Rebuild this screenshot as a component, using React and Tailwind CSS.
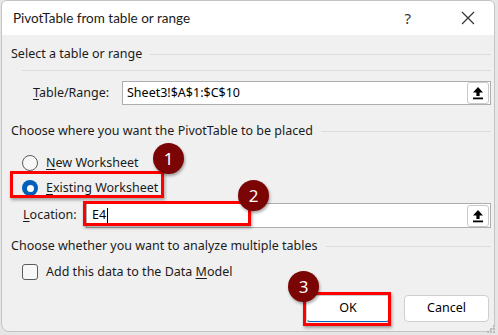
import React from 'react';

const font = { fontFamily: '"Noto Sans", "Open Sans", sans-serif' };

const Ul = ({ children }) => <span className="underline underline-offset-2">{children}</span>;

const UploadBtn = () => (
  <div className="w-[22px] h-[22px] bg-white border border-[#c9c9c9] rounded-[3px] flex items-center justify-center">
    <svg width="12" height="14" viewBox="0 0 12 14">
      <path d="M6 1 L11 6.5 H7.6 V10 H4.4 V6.5 H1 Z" fill="#000" />
      <rect x="1" y="11.5" width="10" height="1.8" fill="#000" />
    </svg>
  </div>
);

const Heading = ({ children }) => (
  <div className="flex items-center h-[20px] gap-[8px]">
    <span className="text-[12.5px] text-[#1b1b1b] whitespace-nowrap">{children}</span>
    <div className="flex-1 border-t border-[#dcdcdc] mt-[1px]" />
  </div>
);

const Badge = ({ n, className }) => (
  <div
    className={`absolute w-[31px] h-[31px] rounded-full bg-[#7b0404] text-white text-[17px] flex items-center justify-center shadow-[1px_2px_3px_rgba(0,0,0,0.35)] ${className}`}
  >
    {n}
  </div>
);

export default function App() {
  return (
    <div className="w-[498px] h-[335px] bg-[#e6e6e6] relative overflow-hidden" style={font}>
      <div className="ml-[1px] w-[494px] h-[332px] bg-[#f0f0f0] border border-[#c4c4c4] rounded-b-[8px] rounded-t-[6px] overflow-hidden flex flex-col">
        {/* title bar */}
        <div className="h-[34px] bg-white flex items-center pl-[11px] shrink-0">
          <span className="text-[13.5px] text-[#1a1a1a]" style={{ fontFamily: 'Lato, "Noto Sans", sans-serif' }}>
            PivotTable from table or range
          </span>
          <span className="ml-auto text-[15px] text-[#333] mr-[50px]">?</span>
          <svg width="14" height="14" viewBox="0 0 14 14" className="mr-[19px]">
            <path d="M1 1 L13 13 M13 1 L1 13" stroke="#333" strokeWidth="1.2" />
          </svg>
        </div>

        <div className="pl-[9px] pr-[3px] flex flex-col">
          <div className="mt-[9px]">
            <Heading>Select a table or range</Heading>
          </div>
          <div className="ml-[11px] mt-[6px] border-t border-[#dcdcdc]" />

          <div className="flex items-center mt-[10px] h-[24px]">
            <span className="ml-[22px] w-[89px] text-[12.5px] text-[#1b1b1b]">
              <Ul>T</Ul>able/Range:
            </span>
            <div className="flex-1 h-[24px] bg-white border border-[#adadad] flex items-center pl-[4px] pr-[1px]">
              <span className="text-[12.5px] text-black">Sheet3!$A$1:$C$10</span>
              <div className="ml-auto">
                <UploadBtn />
              </div>
            </div>
          </div>

          <div className="mt-[16px]">
            <Heading>Choose where you want the PivotTable to be placed</Heading>
          </div>

          <div className="flex items-center mt-[13px] h-[18px] ml-[11px]">
            <div className="w-[16px] h-[16px] rounded-full border border-[#5c5c5c] bg-[#f8f8f8]" />
            <span className="ml-[8px] text-[12.5px] text-[#1b1b1b]">
              <Ul>N</Ul>ew Worksheet
            </span>
          </div>
          <div className="flex items-center mt-[7px] h-[18px] ml-[11px]">
            <div className="w-[16px] h-[16px] rounded-full bg-[#005fb8] flex items-center justify-center">
              <div className="w-[7px] h-[7px] rounded-full bg-white" />
            </div>
            <span className="ml-[8px] text-[12.5px] text-[#1b1b1b]">
              <Ul>E</Ul>xisting Worksheet
            </span>
          </div>

          <div className="flex items-center mt-[6px] h-[25px]">
            <span className="ml-[12px] w-[63px] text-[12.5px] text-[#1b1b1b]">
              <Ul>L</Ul>ocation:
            </span>
            <div className="flex-1 h-[25px] bg-white border border-[#adadad] flex items-center pl-[5px] pr-[1px]">
              <span className="text-[12.5px] text-black">E4</span>
              <span className="w-px h-[15px] bg-black ml-[1px]" />
              <div className="ml-auto">
                <UploadBtn />
              </div>
            </div>
          </div>

          <div className="mt-[8px]">
            <Heading>Choose whether you want to analyze multiple tables</Heading>
          </div>

          <div className="flex items-center mt-[7px] h-[18px] ml-[11px]">
            <div className="w-[16px] h-[16px] rounded-[3px] border border-[#5c5c5c] bg-[#f8f8f8]" />
            <span className="ml-[8px] text-[12.5px] text-[#1b1b1b]">
              Add this data to the Data <Ul>M</Ul>odel
            </span>
          </div>

          <div className="flex justify-end gap-[14px] mt-[14px] pr-[2px]">
            <button className="w-[84px] h-[27px] bg-white border border-[#cfcfcf] border-b-[#005fb8] rounded-[4px] text-[12.5px] text-black">
              OK
            </button>
            <button className="w-[85px] h-[27px] bg-white border border-[#cfcfcf] rounded-[4px] text-[12.5px] text-black">
              Cancel
            </button>
          </div>
        </div>
      </div>

      {/* resize grip */}
      <svg width="10" height="10" viewBox="0 0 10 10" className="absolute left-[486px] top-[324px]">
        <rect x="7" y="1" width="2" height="2" fill="#bdbdbd" />
        <rect x="4" y="4" width="2" height="2" fill="#bdbdbd" />
        <rect x="7" y="4" width="2" height="2" fill="#bdbdbd" />
        <rect x="1" y="7" width="2" height="2" fill="#bdbdbd" />
        <rect x="4" y="7" width="2" height="2" fill="#bdbdbd" />
        <rect x="7" y="7" width="2" height="2" fill="#bdbdbd" />
      </svg>

      {/* annotations */}
      <div className="absolute left-[10px] top-[171px] w-[154px] h-[27px] border-[3px] border-[#ff0000] shadow-[1px_2px_3px_rgba(0,0,0,0.35)]" />
      <div className="absolute left-[83px] top-[201px] w-[168px] h-[25px] border-[3px] border-[#ff0000] shadow-[1px_2px_3px_rgba(0,0,0,0.35)]" />
      <div className="absolute left-[303px] top-[292px] w-[88px] h-[34px] border-[3px] border-[#ff0000] shadow-[1px_2px_3px_rgba(0,0,0,0.35)]" />
      <Badge n="1" className="left-[153px] top-[143px]" />
      <Badge n="2" className="left-[238px] top-[180px]" />
      <Badge n="3" className="left-[288px] top-[271px]" />
    </div>
  );
}
